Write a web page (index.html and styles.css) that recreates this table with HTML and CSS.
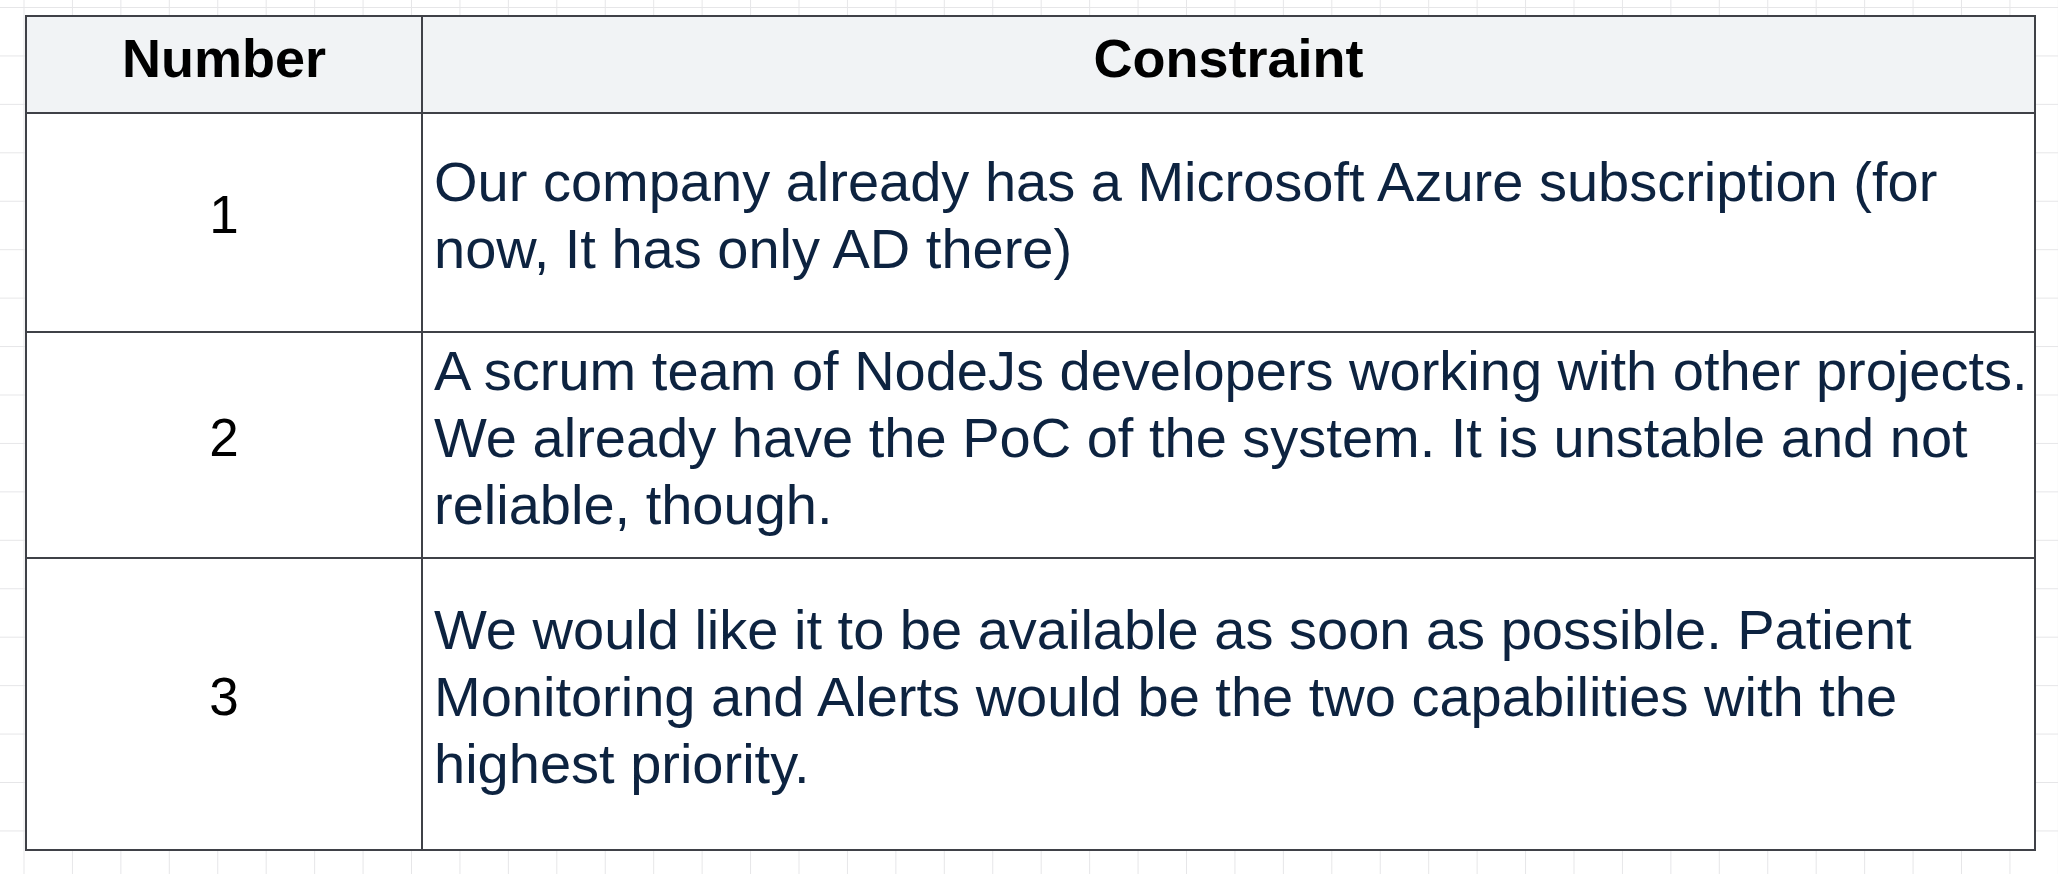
FILE: index.html
```html
<!DOCTYPE html>
<html lang="en">
<head>
<meta charset="utf-8">
<title>Constraints</title>
<link rel="stylesheet" href="styles.css">
</head>
<body>
<div class="canvas">
  <div class="table">
    <div class="cell head num">Number</div>
    <div class="cell head text-h">Constraint</div>

    <div class="cell num">1</div>
    <div class="cell text">Our company already has a Microsoft Azure subscription (for now, It has only AD there)</div>

    <div class="cell num">2</div>
    <div class="cell text">A scrum team of NodeJs developers working with other projects. We already have the PoC of the system. It is unstable and not reliable, though.</div>

    <div class="cell num last">3</div>
    <div class="cell text last">We would like it to be available as soon as possible. Patient Monitoring and Alerts would be the two capabilities with the highest priority.</div>
  </div>
</div>
</body>
</html>
```
FILE: styles.css
```css
html, body {
  margin: 0;
  padding: 0;
}

body {
  width: 2058px;
  height: 874px;
  overflow: hidden;
  background-color: #ffffff;
  background-image:
    linear-gradient(to right, #e6e6e8 1px, transparent 1px),
    linear-gradient(to bottom, #e6e6e8 1px, transparent 1px);
  background-size: 48.45px 48.45px;
  background-position: 23.5px 7px;
  font-family: "Liberation Sans", Arial, sans-serif;
}

.canvas {
  padding: 15px 0 0 25px;
}

.table {
  box-sizing: border-box;
  width: 2011px;
  height: 836px;
  border: 2px solid #3f4147;
  background: #ffffff;
  display: grid;
  grid-template-columns: 396px 1fr;
  grid-template-rows: 97px 219px 226px 1fr;
}

.cell {
  border-right: 2px solid #3f4147;
  border-bottom: 2px solid #3f4147;
  display: flex;
  align-items: center;
  padding: 0 0 16px 0;
  box-sizing: border-box;
}

.cell:nth-child(2n) {
  border-right: none;
}

.cell.last {
  border-bottom: none;
}

.head {
  background: #f1f3f5;
  font-weight: 700;
  font-size: 54px;
  color: #000000;
  justify-content: center;
  padding-bottom: 14px;
}

.num {
  justify-content: center;
  font-size: 53px;
  color: #000000;
}

.head.num {
  font-size: 54px;
}

.text {
  font-size: 56px;
  line-height: 67px;
  color: #0d2340;
  padding-left: 11px;
  padding-right: 4px;
}
```
